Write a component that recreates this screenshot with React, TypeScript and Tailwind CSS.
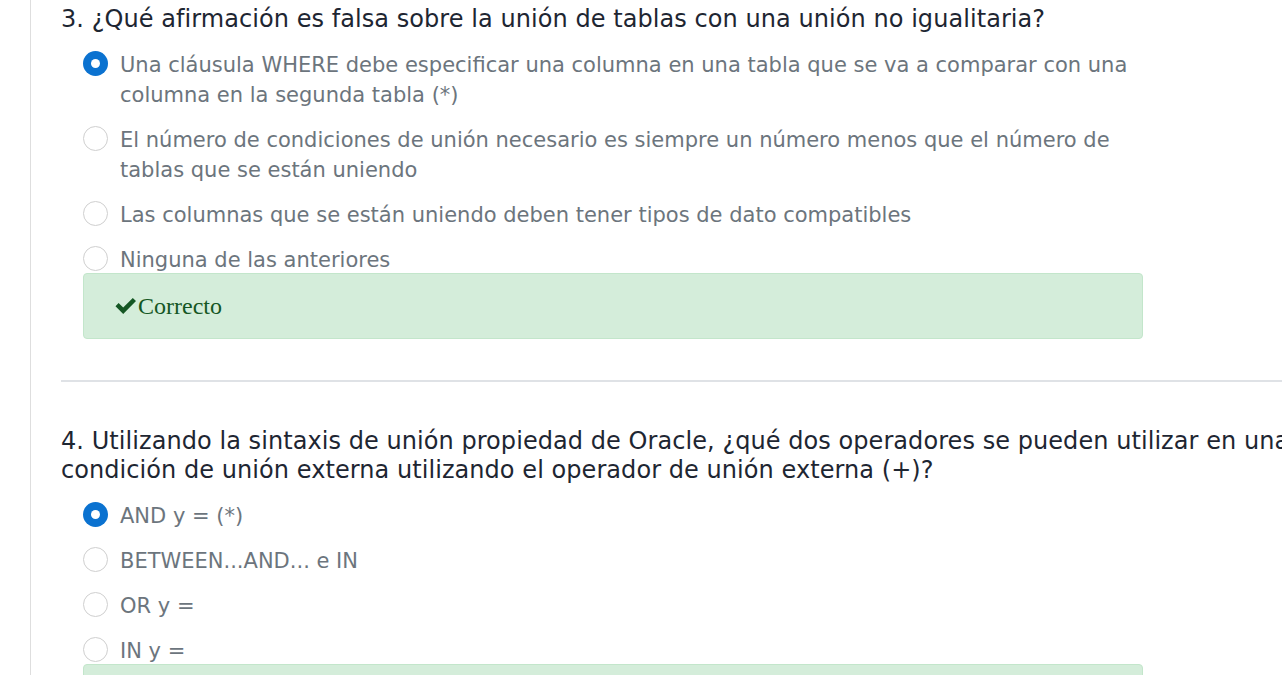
import React from "react";

type Opt = { lines: string[]; selected?: boolean };

function Radio({ selected }: { selected?: boolean }) {
  if (selected) {
    return (
      <span className="mt-[1px] flex h-[25px] w-[25px] shrink-0 items-center justify-center rounded-full bg-[#0b72d0]">
        <span className="h-[9px] w-[9px] rounded-full bg-white" />
      </span>
    );
  }
  return <span className="mt-[1px] h-[25px] w-[25px] shrink-0 rounded-full border border-[#cfcfcf] bg-white" />;
}

function Option({ o }: { o: Opt }) {
  return (
    <div className="flex items-start gap-[12px]">
      <Radio selected={o.selected} />
      <div className="whitespace-nowrap text-[21px] leading-[30px] text-[#6c757d]">
        {o.lines.map((l, i) => (
          <div key={i}>{l}</div>
        ))}
      </div>
    </div>
  );
}

function Check() {
  return (
    <svg width="22" height="16" viewBox="0 0 22 16" className="mr-[1px] mt-[1px]" fill="#155724">
      <path d="M0.5 8.2 L3.6 5.1 L8.2 9.6 L17.8 0 L21 3.1 L8.2 15.9 Z" />
    </svg>
  );
}

function Alert() {
  return (
    <div className="flex h-[66px] w-[1060px] items-center rounded-[4px] border border-[#c3e6cb] bg-[#d4edda] pl-[31px] text-[#155724]">
      <Check />
      <span className="text-[24px] leading-[30px]" style={{ fontFamily: '"Liberation Serif", "Times New Roman", serif' }}>
        Correcto
      </span>
    </div>
  );
}

function Question({ title, options }: { title: string[]; options: Opt[] }) {
  return (
    <div>
      <div className="whitespace-nowrap text-[24px] leading-[29.5px] tracking-[0.06px] text-[#1e2632]">
        {title.map((t, i) => (
          <div key={i}>{t}</div>
        ))}
      </div>
      <div className="ml-[22px] mt-[15px] flex flex-col gap-[15px]">
        {options.map((o, i) => (
          <Option key={i} o={o} />
        ))}
      </div>
      <div className="ml-[22px] -mt-[2px]">
        <Alert />
      </div>
    </div>
  );
}

export default function App() {
  return (
    <div
      className="h-[675px] w-[1282px] overflow-hidden bg-white pl-[30px]"
      style={{ fontFamily: '"DejaVu Sans", Verdana, sans-serif' }}
    >
      <div className="h-full w-[1400px] border-l border-[#dedede] pl-[30px] pt-[5px]">
        <Question
          title={["3. ¿Qué afirmación es falsa sobre la unión de tablas con una unión no igualitaria?"]}
          options={[
            {
              lines: [
                "Una cláusula WHERE debe especificar una columna en una tabla que se va a comparar con una",
                "columna en la segunda tabla (*)",
              ],
              selected: true,
            },
            {
              lines: [
                "El número de condiciones de unión necesario es siempre un número menos que el número de",
                "tablas que se están uniendo",
              ],
            },
            { lines: ["Las columnas que se están uniendo deben tener tipos de dato compatibles"] },
            { lines: ["Ninguna de las anteriores"] },
          ]}
        />
        <div className="mt-[41px] h-[2px] w-[1300px] bg-[#dfe2e6]" />
        <div className="mt-[45px]">
          <Question
            title={[
              "4. Utilizando la sintaxis de unión propiedad de Oracle, ¿qué dos operadores se pueden utilizar en una",
              "condición de unión externa utilizando el operador de unión externa (+)?",
            ]}
            options={[
              { lines: ["AND y = (*)"], selected: true },
              { lines: ["BETWEEN...AND... e IN"] },
              { lines: ["OR y ="] },
              { lines: ["IN y ="] },
            ]}
          />
        </div>
      </div>
    </div>
  );
}
